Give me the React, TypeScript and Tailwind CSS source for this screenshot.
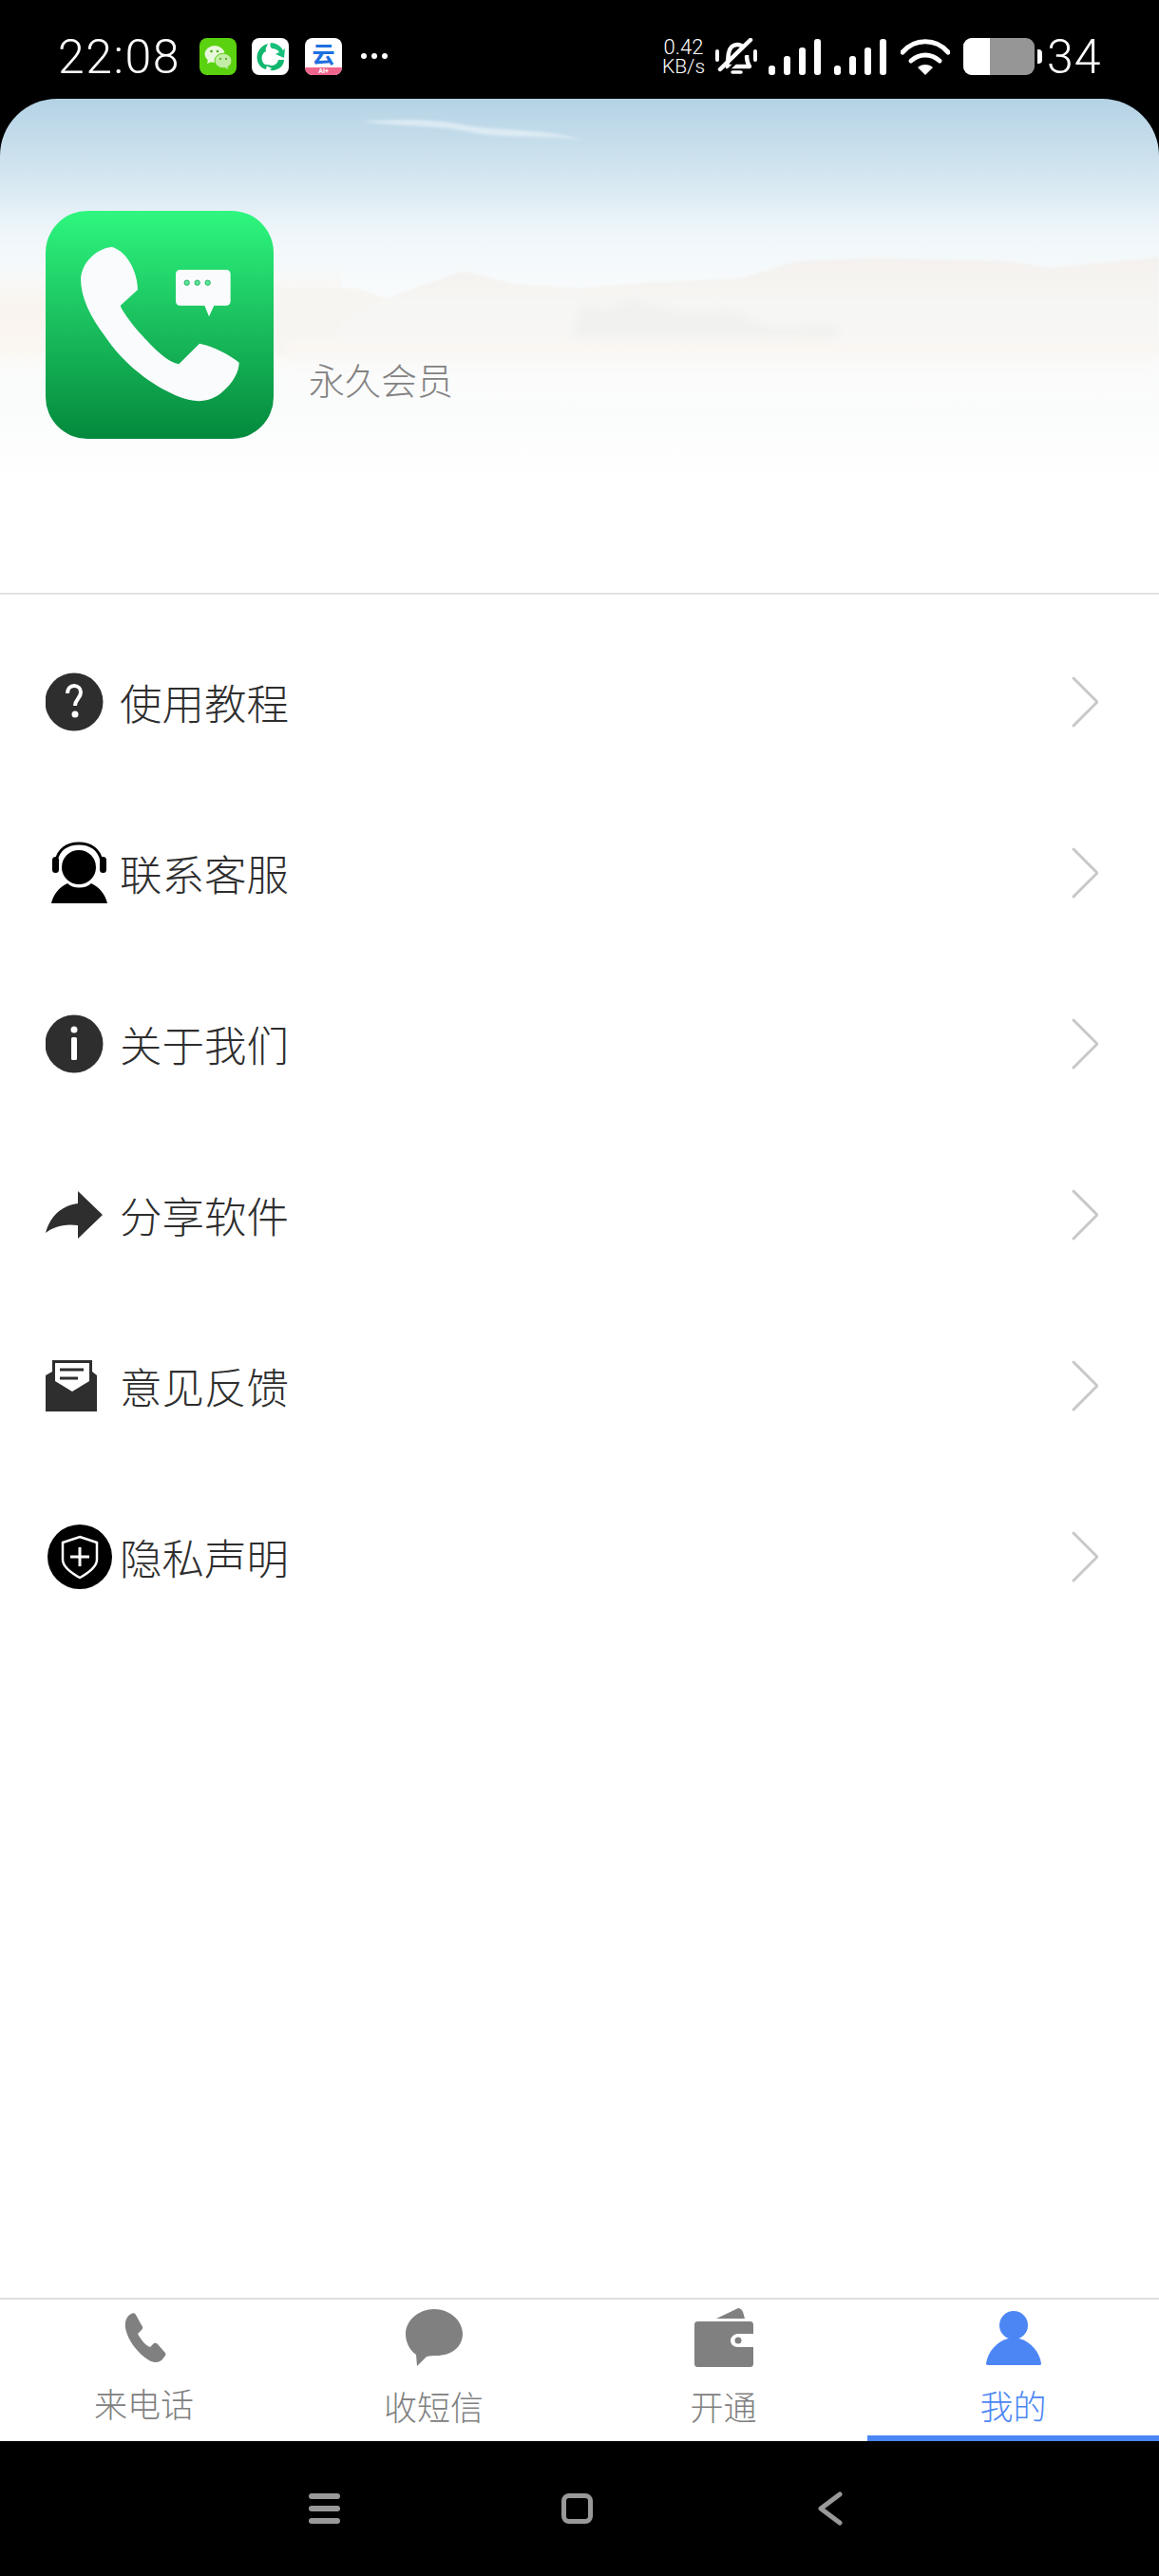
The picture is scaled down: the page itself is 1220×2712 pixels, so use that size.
import { ReactNode } from "react";

const cjk = "font-['Noto_Sans_CJK_SC','Noto_Sans',sans-serif]";

function Bars() {
  return (
    <div className="flex items-end gap-[9px] h-[39px]">
      <div className="w-[7px] h-[10px] rounded-[3px] bg-white" />
      <div className="w-[7px] h-[20px] rounded-[3px] bg-white" />
      <div className="w-[7px] h-[29px] rounded-[3px] bg-white" />
      <div className="w-[7px] h-[38px] rounded-[3px] bg-white" />
    </div>
  );
}

function StatusBar() {
  return (
    <div className="h-[104px] bg-black text-white flex items-start pt-[40px] pl-[61px] font-['Roboto',sans-serif]">
      <div className="w-[126px] h-[39px] flex items-center text-[50px] font-light leading-none tracking-[1.5px] whitespace-nowrap">22:08</div>
      {/* wechat */}
      <div className="ml-[23px] w-[39px] h-[39px] rounded-[8px] bg-[#5ad20f]">
        <svg viewBox="0 0 39 39" className="w-[39px] h-[39px]">
          <ellipse cx="16" cy="17" rx="10.5" ry="9" fill="#e8f8dc" />
          <path d="M9 23l-1 4 5-2z" fill="#e8f8dc" />
          <ellipse cx="25" cy="24" rx="9" ry="7.8" fill="#c3eda6" stroke="#5ad20f" strokeWidth="1" />
          <path d="M29 30l2 3-5-2z" fill="#c3eda6" />
          <circle cx="12.5" cy="14" r="1.3" fill="#4aa712" />
          <circle cx="19" cy="14" r="1.3" fill="#4aa712" />
          <circle cx="22" cy="22" r="1.1" fill="#4aa712" />
          <circle cx="28" cy="22" r="1.1" fill="#4aa712" />
        </svg>
      </div>
      <div className="ml-[16px] w-[39px] h-[39px] rounded-[8px] bg-white">
        <svg viewBox="0 0 39 39" className="w-[39px] h-[39px]" fill="#12b76f">
          <path d="M6 24C4 16 9 8 17 6C15 10 14 12 15 14C11 16 10 20 11 24C12 27 14 28 16 29L15 33C10 32 7 28 6 24Z" />
          <path d="M20 5C26 5 31 9 33 13L35 11L34 21L25 17C27 16 28 15 29 15C27 12 24 11 21 11C19 9 19 7 20 5Z" fill="#16c07a" />
          <path d="M34 23C34 30 27 35 19 34L21 32L13 28C17 28 19 28 20 29C24 29 27 27 28 23Z" />
        </svg>
      </div>
      <div className="ml-[17px] w-[39px] h-[39px] rounded-[8px] bg-white flex flex-col items-center">
        <div className={`h-[31px] leading-[31px] text-[24px] font-bold text-[#1e6fe0] ${cjk}`}>云</div>
        <div className="w-full h-[8px] rounded-b-[8px] bg-[#f0648c] text-[7px] leading-[8px] font-bold text-center text-white">AI+</div>
      </div>
      <div className="ml-[20px] h-[39px] flex items-center gap-[5px] -mt-[1px]">
        <div className="w-[6px] h-[6px] rounded-full bg-white" />
        <div className="w-[6px] h-[6px] rounded-full bg-white" />
        <div className="w-[6px] h-[6px] rounded-full bg-white" />
      </div>

      <div className="ml-[288px] w-[47px] flex flex-col text-[22px] leading-[20px] font-light">
        <div className="text-center">0.42</div>
        <div className="text-center whitespace-nowrap text-[21px]">KB/s</div>
      </div>
      {/* muted bell */}
      <svg viewBox="0 0 44 39" className="ml-[10px] w-[44px] h-[39px]" fill="none" stroke="#fff">
        <path d="M2 14v9M42 14v9" strokeWidth="4" strokeLinecap="round" />
        <path d="M11 30c3-4 2-9 3-14 1-6 5-9 9-9 3 0 5 1 7 3M33 18c0 5 1 9 3 12H11" strokeWidth="4.5" strokeLinejoin="round" />
        <path d="M18 36h9" strokeWidth="3.5" strokeLinecap="round" />
        <path d="M5 33L37 2" strokeWidth="4.5" strokeLinecap="round" />
        <path d="M10 37L42 6" stroke="#000" strokeWidth="3" />
      </svg>
      <div className="ml-[12px]">
        <Bars />
      </div>
      <div className="ml-[14px]">
        <Bars />
      </div>
      <svg viewBox="0 0 52 39" className="ml-[15px] w-[52px] h-[39px]" fill="none" stroke="#fff" strokeWidth="5">
        <path d="M2 15C15 0 37 0 50 15" strokeLinecap="round" />
        <path d="M11 24c9-8 21-8 30 0" strokeLinecap="round" />
        <path d="M26 39l-8-8c4-4 12-4 16 0z" fill="#fff" stroke="none" />
      </svg>
      <div className="ml-[14px] w-[75px] h-[39px] rounded-[9px] bg-[#969696] overflow-hidden">
        <div className="w-[28px] h-[39px] bg-white" />
      </div>
      <div className="ml-[3px] mt-[12px] w-[5px] h-[15px] rounded-r-[4px] bg-white" />
      <div className="ml-[5px] h-[39px] flex items-center text-[50px] font-light leading-none tracking-[1px]">34</div>
    </div>
  );
}

function AppLogo() {
  return (
    <div className="w-[240px] h-[240px] rounded-[44px] bg-gradient-to-b from-[#2ef77f] to-[#04893d] overflow-hidden">
      <svg viewBox="54 36 720 720" className="w-[240px] h-[240px]">
        <path
          d="M265 150C225 152 170 190 165 250C165 310 195 370 240 430C300 520 390 590 480 625C520 640 570 645 610 610C645 580 665 545 665 515C640 495 590 465 540 455L475 520C440 515 395 470 350 420C320 385 295 350 290 335L345 285C345 240 320 170 265 150Z"
          fill="#fafbfd"
        />
        <path
          d="M480 222H623Q638 222 638 237V320Q638 335 623 335H586L570 370L556 335H480Q465 335 465 320V237Q465 222 480 222Z"
          fill="#fafbfd"
        />
        <circle cx="500" cy="263" r="8" fill="#5fe39a" stroke="#22b765" strokeWidth="3" />
        <circle cx="533" cy="263" r="8" fill="#5fe39a" stroke="#22b765" strokeWidth="3" />
        <circle cx="566" cy="263" r="8" fill="#5fe39a" stroke="#22b765" strokeWidth="3" />
      </svg>
    </div>
  );
}

function Header() {
  return (
    <div className="bg-black">
      <div className="relative h-[520px] rounded-t-[60px] overflow-hidden bg-[linear-gradient(to_bottom,#b4d2e5_0%,#d0e4ef_14%,#eff6fa_27%,#f8fbfc_38%,#fafbfb_62%,#ffffff_78%)]">
        {/* landscape behind the profile */}
        <svg viewBox="0 0 1220 520" className="absolute inset-0 w-full h-full" preserveAspectRatio="none">
          <defs>
            <linearGradient id="hill" x1="0" y1="0" x2="0" y2="1">
              <stop offset="0" stopColor="#f4f1ee" />
              <stop offset="0.5" stopColor="#f6f6f4" />
              <stop offset="1" stopColor="#f8f7f5" />
            </linearGradient>
            <linearGradient id="glow" x1="0" y1="0" x2="0" y2="1">
              <stop offset="0" stopColor="#faf2eb" stopOpacity="0" />
              <stop offset="0.35" stopColor="#faf2eb" stopOpacity="0.8" />
              <stop offset="0.7" stopColor="#fbf5ef" stopOpacity="0.8" />
              <stop offset="1" stopColor="#ffffff" stopOpacity="0" />
            </linearGradient>
            <linearGradient id="band" x1="0" y1="0" x2="0" y2="1">
              <stop offset="0" stopColor="#f8f7f5" />
              <stop offset="0.5" stopColor="#fbf7f2" />
              <stop offset="1" stopColor="#f9f9f8" />
            </linearGradient>
            <linearGradient id="water" x1="0" y1="0" x2="0" y2="1">
              <stop offset="0" stopColor="#f9f9f8" />
              <stop offset="1" stopColor="#ffffff" stopOpacity="0" />
            </linearGradient>
            <filter id="soft">
              <feGaussianBlur stdDeviation="1.5" />
            </filter>
            <filter id="softer">
              <feGaussianBlur stdDeviation="5" />
            </filter>
          </defs>
          <rect x="0" y="175" width="360" height="125" fill="url(#glow)" />
          <g filter="url(#soft)">
            <path d="M290 199L376 199L420 215L359 270L290 270Z" fill="#f7f5f2" />
            <path
              d="M359 236L420 205L488 181L540 195L611 199L687 193L778 189L840 171L922 168L1063 171L1104 178L1220 167V270H359Z"
              fill="url(#hill)"
            />
            <path d="M380 24C430 30 470 28 500 36C540 42 590 38 615 44C570 30 520 35 480 26C440 20 420 22 380 24Z" fill="#e3eff6" fillOpacity="0.8" />
          </g>
          <g filter="url(#softer)">
            <path d="M600 262L612 216L640 222L665 210L700 220L730 226L770 222L810 240L880 238L890 262Z" fill="#f1f2f0" />
            <rect x="300" y="252" width="920" height="26" fill="url(#band)" />
            <path d="M300 274H1220V320L1000 325L780 335L620 325L300 310Z" fill="url(#water)" />
          </g>
        </svg>
        <div className="relative flex items-start pt-[118px] pl-[48px]">
          <AppLogo />
          <div className={`ml-[37px] mt-[151px] text-[38px] leading-[52px] font-light text-[#828282] whitespace-nowrap ${cjk}`}>永久会员</div>
        </div>
      </div>
    </div>
  );
}

function Chevron() {
  return (
    <svg viewBox="0 0 28 54" className="w-[28px] h-[54px]" fill="none" stroke="#c8c8c8" strokeWidth="3" strokeLinecap="round">
      <path d="M2 2l25 25L2 52" />
    </svg>
  );
}

const iconFill = "#2e2e2e";

const menu: { label: string; icon: ReactNode }[] = [
  {
    label: "使用教程",
    icon: (
      <>
        <circle cx="30" cy="39" r="30.5" fill={iconFill} />
        <path d="M23 30c0-5 3-8 7-8s7 3 7 7c0 6-6 7-6 14" fill="none" stroke="#fff" strokeWidth="4" />
        <circle cx="31" cy="52" r="3.5" fill="#fff" />
      </>
    ),
  },
  {
    label: "联系客服",
    icon: (
      <>
        <circle cx="35" cy="33" r="18" fill="#000" />
        <path d="M11 27C13 14 23 8 35 8s22 6 24 19" fill="none" stroke="#000" strokeWidth="3" />
        <rect x="7" y="22" width="7" height="17" rx="3.5" fill="#000" />
        <rect x="57" y="22" width="7" height="17" rx="3.5" fill="#000" />
        <path d="M6 71C8 62 14 54 23 50C29 56 42 56 48 50C57 54 63 62 65 71Z" fill="#000" />
      </>
    ),
  },
  {
    label: "关于我们",
    icon: (
      <>
        <circle cx="30" cy="39" r="30.5" fill={iconFill} />
        <circle cx="30" cy="24" r="3.5" fill="#fff" />
        <rect x="27" y="32" width="6" height="24" rx="1.5" fill="#fff" />
      </>
    ),
  },
  {
    label: "分享软件",
    icon: <path d="M34 14L60 39L34 64V50C18 48 8 52 0 58C4 42 16 29 34 27Z" fill={iconFill} />,
  },
  {
    label: "意见反馈",
    icon: (
      <>
        <path d="M7 12H49V24L54 28V66H0V28L7 24Z" fill={iconFill} />
        <path d="M10 15H46V34L28 45L10 34Z" fill="#fff" />
        <path d="M15 22H40M15 31H34" stroke={iconFill} strokeWidth="3" />
      </>
    ),
  },
  {
    label: "隐私声明",
    icon: (
      <>
        <circle cx="36" cy="39" r="34" fill="#000" />
        <path d="M36 18L54 24V42C54 50 45 56 36 61C27 56 18 50 18 42V24Z" fill="none" stroke="#fff" strokeWidth="2.5" />
        <path d="M26 39H46M36 29V49" stroke="#fff" strokeWidth="3" />
      </>
    ),
  },
];

function MenuList() {
  return (
    <div className="flex-1 bg-white pt-[23px] border-t-2 border-[#e2e2e2]">
      {menu.map((item) => (
        <div key={item.label} className="h-[180px] flex items-center pl-[48px] pr-[64px]">
          <svg viewBox="0 0 80 80" className="mt-[2px] w-[80px] h-[80px]">
            {item.icon}
          </svg>
          <div className={`-ml-[2px] flex-1 text-[44.5px] leading-[60px] font-light text-[#2e2e2e] ${cjk}`}>{item.label}</div>
          <Chevron />
        </div>
      ))}
    </div>
  );
}

const gray = "#808080";
const blue = "#4c86f5";

const tabs: { label: string; labelClass: string; icon: ReactNode; active?: boolean }[] = [
  {
    label: "来电话",
    labelClass: "mt-[16px]",
    icon: (
      <path
        d="M10 6C6 8 3 13 4 21C6 33 17 48 29 55C32 57 38 58 42 55L46 50C47 48 46 47 45 46L38 38C36 36 34 37 33 38L30 41C26 40 20 33 17 27L21 23C22 22 23 20 21 18L15 7C14 5 12 5 10 6Z"
        fill={gray}
        transform="translate(8 0)"
      />
    ),
  },
  {
    label: "收短信",
    labelClass: "mt-[19px]",
    icon: (
      <path
        d="M32 1C48 1 62 13 62 27C62 41 50 50 34 50C30 50 28 50 24 51L14 61L13 49C6 44 2 36 2 27C2 13 16 1 32 1Z"
        fill={gray}
      />
    ),
  },
  {
    label: "开通",
    labelClass: "mt-[19px]",
    icon: (
      <>
        <path d="M24 11L47 0C49 0 51 2 52 4L54 11Z" fill={gray} />
        <path
          d="M5 14H59C62 14 63 15 63 18V27H47C42 27 39 31 39 34C39 38 42 41 47 41H63V58C63 61 62 62 59 62H5C2 62 1 61 1 58V18C1 15 2 14 5 14Z"
          fill={gray}
        />
        <circle cx="47" cy="34" r="3.5" fill={gray} />
      </>
    ),
  },
  {
    label: "我的",
    labelClass: "mt-[18px]",
    active: true,
    icon: (
      <>
        <circle cx="32" cy="18" r="15" fill={blue} />
        <path d="M26 32C14 35 5 46 3 58C3 60 4 60 6 60H58C60 60 61 60 61 58C59 46 50 35 38 32Z" fill={blue} />
      </>
    ),
  },
];

function TabBar() {
  return (
    <div className="h-[151px] bg-white border-t-2 border-[#dedede] grid grid-cols-4">
      {tabs.map((t) => (
        <div
          key={t.label}
          className={`flex flex-col items-center pt-[9px] -ml-[2px] border-b-[6px] ${t.active ? "border-[#4c86f5]" : "border-transparent"}`}
        >
          <svg viewBox="0 0 64 64" className="w-[64px] h-[64px]">
            {t.icon}
          </svg>
          <div className={`text-[35px] leading-[40px] font-light whitespace-nowrap ${t.labelClass} ${t.active ? "text-[#4c86f5]" : "text-[#808080]"} ${cjk}`}>
            {t.label}
          </div>
        </div>
      ))}
    </div>
  );
}

function NavBar() {
  return (
    <div className="h-[142px] bg-black flex items-start pt-[55px] pl-[325px]">
      <div className="w-[33px] h-[32px] flex flex-col justify-between">
        <div className="h-[6px] rounded-full bg-[#999]" />
        <div className="h-[6px] rounded-full bg-[#999]" />
        <div className="h-[6px] rounded-full bg-[#999]" />
      </div>
      <div className="ml-[233px] w-[33px] h-[32px] rounded-[8px] border-[5px] border-[#999]" />
      <svg viewBox="0 0 26 36" className="ml-[237px] -mt-[2px] w-[26px] h-[36px]" fill="none" stroke="#999" strokeWidth="5" strokeLinecap="round" strokeLinejoin="round">
        <path d="M23 3L3 18L23 33" />
      </svg>
    </div>
  );
}

export default function App() {
  return (
    <div className="w-[1220px] h-[2712px] flex flex-col bg-white overflow-hidden">
      <StatusBar />
      <Header />
      <MenuList />
      <TabBar />
      <NavBar />
    </div>
  );
}
